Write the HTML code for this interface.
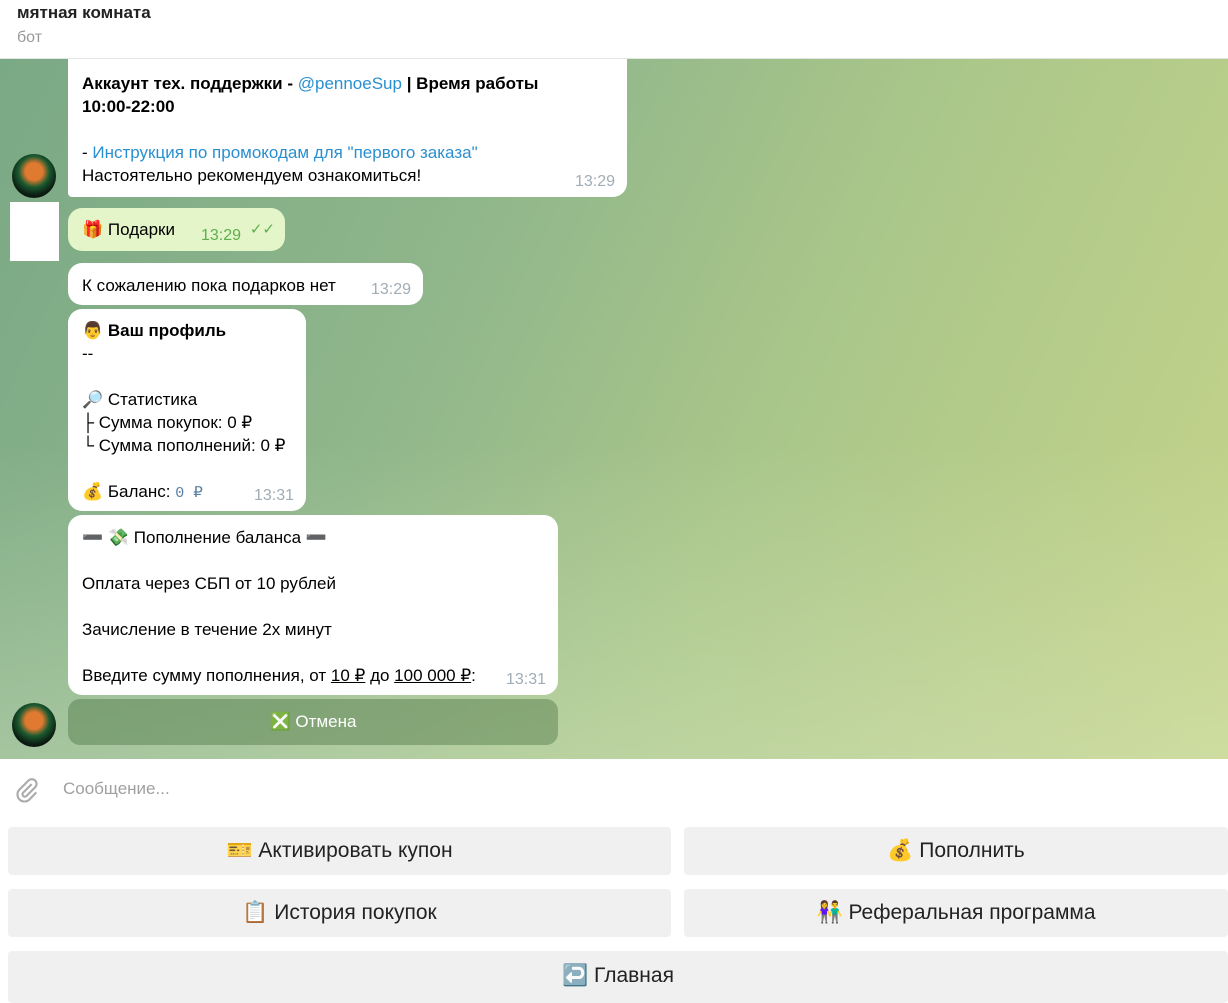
<!DOCTYPE html>
<html><head><meta charset="utf-8"><style>
*{margin:0;padding:0;box-sizing:border-box}
body{width:1228px;height:989px;overflow:hidden;background:#fff;font-family:"Liberation Sans","DejaVu Sans",sans-serif;font-size:17px;color:#000;position:relative}
.hdr{position:absolute;left:0;top:0;width:1228px;height:59px;background:#fff;border-bottom:1px solid #e4e4e4}
.t1{position:absolute;left:17px;top:3px;font-weight:bold;font-size:17px;color:#222}
.t2{position:absolute;left:17px;top:29px;font-size:16px;color:#999}
.chat{position:absolute;left:0;top:59px;width:1228px;height:700px;background:linear-gradient(115deg,#7aa985 0%,#90b68b 35%,#a9c68a 60%,#c6d48a 100%)}
.chat:after{content:"";position:absolute;left:0;top:0;right:0;bottom:0;background:linear-gradient(180deg,rgba(255,255,255,0) 55%,rgba(220,235,200,.35) 100%)}
.b{position:absolute;background:#fff;border-radius:14px;padding:0 14px;line-height:23px;z-index:2}
.tm{position:absolute;right:12px;bottom:4px;color:#a0acb6;font-size:16px}
a{color:#2a8fd0;text-decoration:none}
.av{position:absolute;left:12px;width:44px;height:44px;border-radius:50%;background:radial-gradient(circle at 50% 40%,#e07a30 0 25%,#1a5a30 45%,#0b1a10 70%);z-index:2}
.inp{position:absolute;left:0;top:759px;width:1228px;height:60px;background:#fff}
.btn{position:absolute;height:48px;background:#f0f0f0;border-radius:4px;font-size:21px;color:#222;display:flex;align-items:center;justify-content:center}
</style></head><body>
<div class="hdr"><div class="t1">мятная комната</div><div class="t2">бот</div></div>
<div class="chat">
 <div class="b" style="left:68px;top:0;width:559px;height:138px;border-radius:0 0 14px 4px;padding-top:13px"><b>Аккаунт тех. поддержки - <a style="font-weight:normal">@pennoeSup</a> | Время работы<br>10:00-22:00</b><br><br>- <a>Инструкция по промокодам для "первого заказа"</a><br>Настоятельно рекомендуем ознакомиться!<span class="tm">13:29</span></div>
 <div class="av" style="top:95px"></div>
 <div style="position:absolute;left:10px;top:143px;width:49px;height:59px;background:#fff;z-index:2"></div>
 <div class="b" style="left:68px;top:149px;width:217px;height:43px;background:#e3f5c9;padding-top:10px">🎁 Подарки<span class="tm" style="color:#5fae4f;right:44px">13:29</span><span style="position:absolute;right:10px;top:10px;color:#5fae4f;font-size:15px">✓✓</span></div>
 <div class="b" style="left:68px;top:204px;width:355px;height:42px;padding-top:11px">К сожалению пока подарков нет<span class="tm">13:29</span></div>
 <div class="b" style="left:68px;top:250px;width:238px;height:202px;padding-top:10px"><b>👨 Ваш профиль</b><br>--<br><br>🔎 Статистика<br>├ Сумма покупок: 0 ₽<br>└ Сумма пополнений: 0 ₽<br><br>💰 Баланс: <span style="font-family:'Liberation Mono',monospace;font-size:15px;color:#5a7fa0">0 ₽</span><span class="tm">13:31</span></div>
 <div class="b" style="left:68px;top:456px;width:490px;height:180px;padding-top:11px">➖ 💸 Пополнение баланса ➖<br><br>Оплата через СБП от 10 рублей<br><br>Зачисление в течение 2х минут<br><br>Введите сумму пополнения, от <u>10 ₽</u> до <u>100 000 ₽</u>:<span class="tm">13:31</span></div>
 <div style="position:absolute;left:68px;top:640px;width:490px;height:46px;border-radius:12px;background:rgba(80,120,70,.45);color:#fff;font-size:17px;display:flex;align-items:center;justify-content:center;z-index:2">❎ Отмена</div>
 <div class="av" style="top:644px"></div>
</div>
<div class="inp"><svg style="position:absolute;left:13px;top:16px" width="28" height="30" viewBox="0 0 24 24" fill="none" stroke="#aaa" stroke-width="1.8"><path d="M16 7l-7.5 7.5a2 2 0 0 0 2.8 2.8L19 9.6a4 4 0 0 0-5.7-5.7L5.6 11.6a6 6 0 0 0 8.5 8.5L20 14"/></svg><div style="position:absolute;left:63px;top:20px;color:#a0a0a0;font-size:17px">Сообщение...</div></div>
<div class="btn" style="left:8px;top:827px;width:663px">🎫 Активировать купон</div>
<div class="btn" style="left:684px;top:827px;width:544px">💰 Пополнить</div>
<div class="btn" style="left:8px;top:889px;width:663px">📋 История покупок</div>
<div class="btn" style="left:684px;top:889px;width:544px">👫 Реферальная программа</div>
<div class="btn" style="left:8px;top:951px;width:1220px;height:52px;align-items:flex-start;padding-top:13px">↩️ Главная</div>
</body></html>
